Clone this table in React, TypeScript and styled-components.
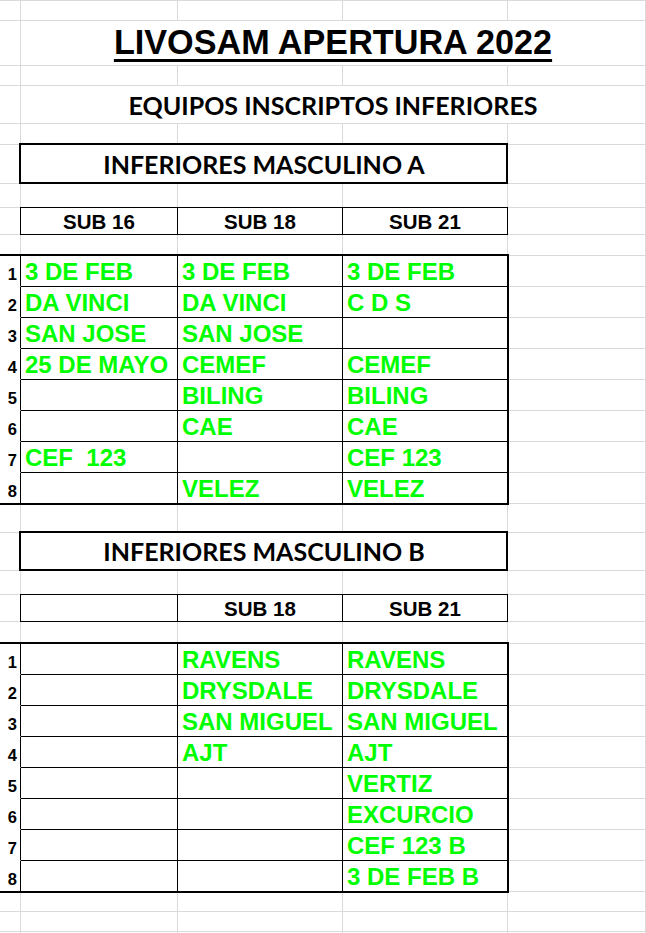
import React from 'react';
import styled, { createGlobalStyle } from 'styled-components';

const GRID = '#dadada';
const INK = '#000000';
const GREEN = '#00ff00';

type Edge = 'grid' | 'ink' | 'none';
const edgeColor = (e?: Edge) => (e === 'ink' ? INK : e === 'none' ? '#ffffff' : GRID);

const ROW_HEIGHTS = [
  20, 45, 20, 38, 21, 39, 24, 27, 21,
  31, 31, 31, 31, 31, 31, 31, 31,
  29, 38, 24, 27, 22,
  31, 31, 31, 31, 31, 31, 31, 31,
  20, 20, 20,
];

const Global = createGlobalStyle`
  html, body { margin: 0; padding: 0; background: #ffffff; }
  body { overflow: hidden; }
`;

const Sheet = styled.div`
  display: grid;
  grid-template-columns: 21px 157px 165px 165px 138px;
  grid-template-rows: ${ROW_HEIGHTS.map((h) => `${h}px`).join(' ')};
  width: 646px;
  border-top: 1px solid ${GRID};
  background: #ffffff;
  font-family: 'Liberation Sans', Arial, sans-serif;
  font-weight: 700;
`;

type CellProps = { $r: number; $c: number; $span?: number; $right?: Edge; $bottom?: Edge };

const Cell = styled.div<CellProps>`
  grid-row: ${(p) => p.$r};
  grid-column: ${(p) => p.$c} / span ${(p) => p.$span ?? 1};
  box-sizing: border-box;
  min-width: 0;
  border-right: 1px solid ${(p) => edgeColor(p.$right)};
  border-bottom: 1px solid ${(p) => edgeColor(p.$bottom)};
  display: flex;
  align-items: flex-end;
  white-space: pre;
  line-height: 1;
`;

const TitleCell = styled(Cell)`
  justify-content: center;
  padding-bottom: 6px;
  font-size: 34.2px;
  color: ${INK};
  text-decoration: underline;
  text-decoration-thickness: 3px;
  text-underline-offset: 5px;
`;

const SubtitleCell = styled(Cell)`
  justify-content: center;
  padding-bottom: 5px;
  font-family: Lato, 'Noto Sans', sans-serif;
  font-size: 25px;
  color: ${INK};
`;

const BoxTitleCell = styled(Cell)`
  justify-content: center;
  padding-bottom: 6px;
  font-family: Lato, 'Noto Sans', sans-serif;
  font-size: 25px;
  color: ${INK};
`;

const ColHeadCell = styled(Cell)`
  justify-content: center;
  padding-bottom: 2px;
  font-size: 20.5px;
  color: ${INK};
`;

const RowNumCell = styled(Cell)`
  justify-content: flex-end;
  padding: 0 3px 4px 0;
  font-size: 16.5px;
  color: ${INK};
`;

const TeamCell = styled(Cell)`
  padding: 0 0 2px 4px;
  font-size: 24px;
  color: ${GREEN};
`;

type FrameProps = { $r: number; $rows: number; $c: number; $cols: number };

const FrameBase = styled.div<FrameProps>`
  grid-row: ${(p) => p.$r} / span ${(p) => p.$rows};
  grid-column: ${(p) => p.$c} / span ${(p) => p.$cols};
  pointer-events: none;
  z-index: 1;
  box-sizing: border-box;
`;

const BoxFrame = styled(FrameBase)`
  margin: -2px 0 0 -2px;
  border: 2px solid ${INK};
`;

const HeadFrame = styled(FrameBase)`
  margin: -1px 0 0 -1px;
  border: 1px solid ${INK};
`;

const TableFrame = styled(FrameBase)`
  margin: -2px -1px -1px 0;
  border-top: 2px solid ${INK};
  border-right: 2px solid ${INK};
  border-bottom: 2px solid ${INK};
`;

const tableA: [string, string, string][] = [
  ['3 DE FEB', '3 DE FEB', '3 DE FEB'],
  ['DA VINCI', 'DA VINCI', 'C D S'],
  ['SAN JOSE', 'SAN JOSE', ''],
  ['25 DE MAYO', 'CEMEF', 'CEMEF'],
  ['', 'BILING', 'BILING'],
  ['', 'CAE', 'CAE'],
  ['CEF  123', '', 'CEF 123'],
  ['', 'VELEZ', 'VELEZ'],
];

const tableB: [string, string, string][] = [
  ['', 'RAVENS', 'RAVENS'],
  ['', 'DRYSDALE', 'DRYSDALE'],
  ['', 'SAN MIGUEL', 'SAN MIGUEL'],
  ['', 'AJT', 'AJT'],
  ['', '', 'VERTIZ'],
  ['', '', 'EXCURCIO'],
  ['', '', 'CEF 123 B'],
  ['', '', '3 DE FEB B'],
];

const blankRow = (r: number) =>
  [1, 2, 3, 4, 5].map((c) => <Cell key={`b-${r}-${c}`} $r={r} $c={c} />);

const boxRow = (r: number, title: string) => [
  <Cell key={`a-${r}`} $r={r} $c={1} />,
  <BoxTitleCell key={`t-${r}`} $r={r} $c={2} $span={3} $right="ink" $bottom="ink">
    {title}
  </BoxTitleCell>,
  <Cell key={`e-${r}`} $r={r} $c={5} />,
  <BoxFrame key={`f-${r}`} $r={r} $rows={1} $c={2} $cols={3} />,
];

const headRow = (r: number, heads: string[]) => [
  <Cell key={`a-${r}`} $r={r} $c={1} />,
  ...heads.map((h, i) => (
    <ColHeadCell key={`h-${r}-${i}`} $r={r} $c={2 + i} $right="ink" $bottom="ink">
      {h}
    </ColHeadCell>
  )),
  <Cell key={`e-${r}`} $r={r} $c={5} />,
  <HeadFrame key={`f-${r}`} $r={r} $rows={1} $c={2} $cols={3} />,
];

const dataRows = (start: number, rows: [string, string, string][]) => [
  ...rows.flatMap((row, i) => {
    const r = start + i;
    return [
      <RowNumCell key={`n-${r}`} $r={r} $c={1} $right="ink" $bottom="none">
        {String(i + 1)}
      </RowNumCell>,
      ...row.map((t, j) => (
        <TeamCell key={`d-${r}-${j}`} $r={r} $c={2 + j} $right="ink" $bottom="ink">
          {t}
        </TeamCell>
      )),
      <Cell key={`e-${r}`} $r={r} $c={5} />,
    ];
  }),
  <TableFrame key={`tf-${start}`} $r={start} $rows={rows.length} $c={1} $cols={4} />,
];

export default function App() {
  return (
    <>
      <Global />
      <Sheet>
        {blankRow(1)}
        <Cell $r={2} $c={1} />
        <TitleCell $r={2} $c={2} $span={4}>LIVOSAM APERTURA 2022</TitleCell>
        {blankRow(3)}
        <Cell $r={4} $c={1} />
        <SubtitleCell $r={4} $c={2} $span={4}>EQUIPOS INSCRIPTOS INFERIORES</SubtitleCell>
        {blankRow(5)}
        {boxRow(6, 'INFERIORES MASCULINO A')}
        {blankRow(7)}
        {headRow(8, ['SUB 16', 'SUB 18', 'SUB 21'])}
        {blankRow(9)}
        {dataRows(10, tableA)}
        {blankRow(18)}
        {boxRow(19, 'INFERIORES MASCULINO B')}
        {blankRow(20)}
        {headRow(21, ['', 'SUB 18', 'SUB 21'])}
        {blankRow(22)}
        {dataRows(23, tableB)}
        {blankRow(31)}
        {blankRow(32)}
        {blankRow(33)}
      </Sheet>
    </>
  );
}
